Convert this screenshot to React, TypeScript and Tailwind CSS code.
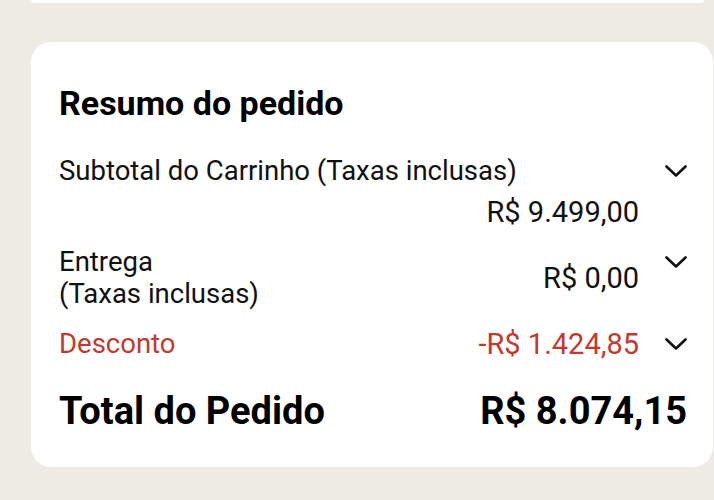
type Line = {
  label: string[];
  value: string;
  red?: boolean;
  wrapValue?: boolean;
};

const lines: Line[] = [
  { label: ["Subtotal do Carrinho (Taxas inclusas)"], value: "R$ 9.499,00", wrapValue: true },
  { label: ["Entrega", "(Taxas inclusas)"], value: "R$ 0,00" },
  { label: ["Desconto"], value: "-R$ 1.424,85", red: true },
];

function Chevron() {
  return (
    <svg width="22" height="12" viewBox="0 0 22 12" fill="none" className="shrink-0">
      <path d="M1.5 1.5 11 10.5 20.5 1.5" stroke="#111" strokeWidth="2.6" strokeLinecap="round" strokeLinejoin="round" />
    </svg>
  );
}

function SummaryLine({ line }: { line: Line }) {
  const color = line.red ? "text-[#c4392e]" : "text-[#111]";
  if (line.wrapValue) {
    return (
      <div className="flex flex-col">
        <div className="flex items-center justify-between">
          <span className={`text-[27.5px] ${color}`}>{line.label[0]}</span>
          <Chevron />
        </div>
        <div className={`self-end pr-[48px] mt-[9px] text-[29px] ${color}`}>{line.value}</div>
      </div>
    );
  }
  return (
    <div className="flex items-start">
      <div className={`flex-1 flex flex-col text-[27.5px] ${color}`}>
        {line.label.map((l) => (
          <span key={l}>{l}</span>
        ))}
      </div>
      <span className={`text-[29px] ${color} ${line.label.length > 1 ? "self-center" : ""}`}>{line.value}</span>
      <div className="w-[48px] h-[32px] flex items-center justify-end">
        <Chevron />
      </div>
    </div>
  );
}

export default function App() {
  return (
    <div className="w-[714px] h-[500px] bg-[#eeebe5] overflow-hidden font-['Roboto',sans-serif]">
      <div className="ml-[31px] w-[673px] h-[3px] bg-white rounded-b-[3px]" />
      <div className="ml-[31px] mt-[39px] w-[682px] h-[425px] bg-white rounded-[20px] pl-[28px] pr-[26px] pt-[41px]">
        <h2 className="text-[34px] leading-[40px] font-bold text-black">Resumo do pedido</h2>
        <div className="mt-[32px] flex flex-col gap-[18px] leading-[32px]">
          {lines.map((l) => (
            <SummaryLine key={l.value} line={l} />
          ))}
        </div>
        <div className="mt-[28px] flex items-center justify-between text-[38px] leading-[46px] font-bold text-black">
          <span>Total do Pedido</span>
          <span>R$ 8.074,15</span>
        </div>
      </div>
    </div>
  );
}
